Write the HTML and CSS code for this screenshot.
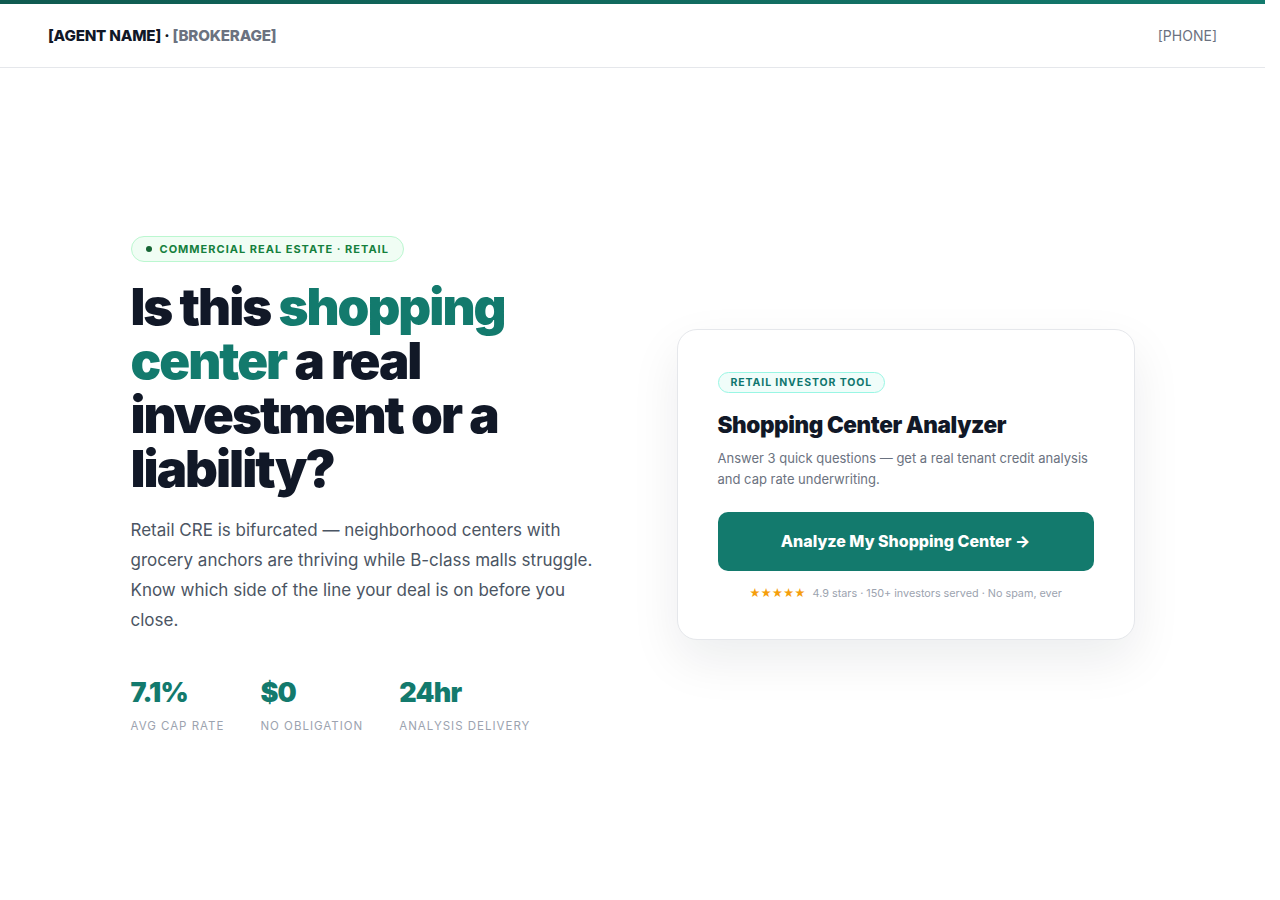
FILE: index.html
```html
<!DOCTYPE html>
<html lang="en">

<head>
    <meta charset="UTF-8">
    <meta name="viewport" content="width=device-width, initial-scale=1.0">
    <title>Shopping Center Analyzer</title>
    <link rel="stylesheet" href="styles.css">
</head>

<body>
    <div class="topline"></div>
    <header class="header">
        <div class="brand">[AGENT NAME] <span class="dot_sep">·</span> <span class="brokerage">[BROKERAGE]</span></div>
        <div class="phone">[PHONE]</div>
    </header>

    <section class="hero">
        <div class="hero_inner">
            <div class="hero_left">
                <div class="tag"><span class="tag_dot"></span>Commercial Real Estate · Retail</div>
                <h1 class="headline">Is this <span class="accent">shopping center</span> a real investment or a liability?</h1>
                <p class="lead">Retail CRE is bifurcated — neighborhood centers with grocery anchors are thriving while B-class malls struggle. Know which side of the line your deal is on before you close.</p>

                <div class="stats">
                    <div class="stat">
                        <div class="stat_num">7.1%</div>
                        <div class="stat_label">Avg Cap Rate</div>
                    </div>
                    <div class="stat">
                        <div class="stat_num">$0</div>
                        <div class="stat_label">No Obligation</div>
                    </div>
                    <div class="stat">
                        <div class="stat_num">24hr</div>
                        <div class="stat_label">Analysis Delivery</div>
                    </div>
                </div>
            </div>

            <div class="card">
                <div class="card_tag">Retail Investor Tool</div>
                <h2 class="card_title">Shopping Center Analyzer</h2>
                <p class="card_desc">Answer 3 quick questions — get a real tenant credit analysis and cap rate underwriting.</p>
                <button type="button" class="cta_btn">Analyze My Shopping Center →</button>
                <p class="card_note"><span class="stars">★★★★★</span> 4.9 stars · 150+ investors served · No spam, ever</p>
            </div>
        </div>
    </section>

    <!-- rest of the page continues below the fold -->
    <section class="more"></section>
</body>

</html>
```

FILE: styles.css
```css
* {
    box-sizing: border-box;
}

body {
    margin: 0;
    padding-right: 15px;
    background: #fff;
    color: #111827;
    font-family: "Inter", "Liberation Sans", sans-serif;
}

.topline {
    height: 4px;
    background: linear-gradient(90deg, #0f5a50, #137a6d);
}

.header {
    height: 64px;
    display: flex;
    align-items: center;
    justify-content: space-between;
    padding: 0 48px;
    border-bottom: 1px solid #e5e7eb;
}

.brand {
    font-weight: 800;
    font-size: 15.2px;
    letter-spacing: -0.2px;
    color: #111827;
}

.brokerage {
    color: #6b7280;
}

.phone {
    font-size: 14px;
    color: #6b7280;
}

.hero {
    min-height: calc(100vh - 68px);
    display: flex;
    align-items: center;
}

.hero_inner {
    width: 1004px;
    margin: 0 auto;
    display: grid;
    grid-template-columns: 1fr 458px;
    gap: 80px;
    align-items: center;
}

.tag {
    display: inline-flex;
    align-items: center;
    gap: 8px;
    height: 26px;
    padding: 0 14px;
    border: 1px solid #bbf7d0;
    border-radius: 20px;
    background: #f0fdf4;
    color: #15803d;
    font-size: 11px;
    font-weight: 700;
    letter-spacing: 1px;
    text-transform: uppercase;
}

.tag_dot {
    width: 6px;
    height: 6px;
    border-radius: 50%;
    background: #166534;
}

.headline {
    margin: 18px 0 19px;
    font-size: 51px;
    font-weight: 900;
    line-height: 54px;
    letter-spacing: -2px;
    color: #111827;
    max-width: 400px;
}

.accent {
    color: #137a6d;
}

.lead {
    margin: 0;
    font-size: 17px;
    line-height: 30px;
    color: #4b5563;
}

.stats {
    display: flex;
    gap: 36px;
    margin-top: 41px;
}

.stat_num {
    font-size: 27px;
    font-weight: 900;
    letter-spacing: -0.8px;
    color: #137a6d;
    line-height: 34px;
}

.stat_label {
    margin-top: 9px;
    font-size: 11.5px;
    letter-spacing: 1px;
    text-transform: uppercase;
    color: #9ca3af;
}

.card {
    padding: 40px 40px 39px;
    border: 1px solid #e5e7eb;
    border-radius: 20px;
    background: #fff;
    box-shadow: 0 20px 50px rgba(17, 24, 39, 0.08);
}

.card_tag {
    display: inline-block;
    padding: 3px 12px;
    border: 1px solid #99f6e4;
    border-radius: 20px;
    background: #f0fdfa;
    color: #0f766e;
    font-size: 10.5px;
    font-weight: 700;
    letter-spacing: 0.9px;
    text-transform: uppercase;
}

.card_title {
    margin: 18px 0 10px;
    font-size: 22.5px;
    font-weight: 900;
    letter-spacing: -0.4px;
    color: #111827;
}

.card_desc {
    margin: 0 0 22px;
    font-size: 13px;
    line-height: 21px;
    color: #6b7280;
}

.cta_btn {
    width: 100%;
    height: 59px;
    border: none;
    border-radius: 10px;
    background: #137a6d;
    color: #fff;
    font-family: inherit;
    font-size: 16px;
    font-weight: 800;
    letter-spacing: 0;
    cursor: pointer;
}

.card_note {
    margin: 16px 0 0;
    text-align: center;
    font-size: 10.8px;
    color: #9ca3af;
}

.stars {
    color: #f59e0b;
    margin-right: 4px;
}

.more {
    height: 820px;
}
```
